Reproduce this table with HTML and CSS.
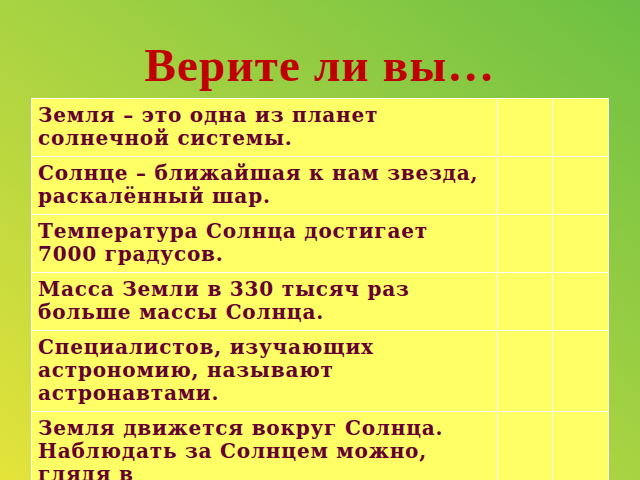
FILE: index.html
```html
<!DOCTYPE html>
<html lang="ru">
<head>
<meta charset="utf-8">
<link rel="stylesheet" href="styles.css">
</head>
<body>
<div class="slide">
  <h1 class="title">Верите ли вы…</h1>
  <table class="quiz">
    <colgroup><col class="c-text"><col class="c-a"><col class="c-b"></colgroup>
    <tr><td>Земля – это одна из планет<br>солнечной системы.</td><td></td><td></td></tr>
    <tr><td>Солнце – ближайшая к нам звезда,<br>раскалённый шар.</td><td></td><td></td></tr>
    <tr><td>Температура Солнца достигает<br>7000 градусов.</td><td></td><td></td></tr>
    <tr><td>Масса Земли в 330 тысяч раз<br>больше массы Солнца.</td><td></td><td></td></tr>
    <tr><td>Специалистов, изучающих<br>астрономию, называют<br>астронавтами.</td><td></td><td></td></tr>
    <tr><td>Земля движется вокруг Солнца.<br>Наблюдать за Солнцем можно,<br>глядя в<br>телескоп.</td><td></td><td></td></tr>
  </table>
</div>
</body>
</html>
```

FILE: styles.css
```css
html, body {
  margin: 0;
  padding: 0;
  width: 640px;
  height: 480px;
  overflow: hidden;
}
.slide {
  width: 640px;
  height: 480px;
  background: linear-gradient(to top right, #e4e33a 0%, #a8d342 50%, #6cc043 100%);
  display: flex;
  flex-direction: column;
  align-items: center;
}
.title {
  flex-shrink: 0;
  margin: 0;
  height: 98px;
  box-sizing: border-box;
  padding-top: 38px;
  font-family: "Liberation Serif", serif;
  font-weight: bold;
  font-size: 47px;
  line-height: 54px;
  letter-spacing: 1.2px;
  color: #c00000;
}
.quiz {
  flex-shrink: 0;
  width: 577px;
  border-collapse: collapse;
  background: #ffff66;
  table-layout: fixed;
  border: 1px solid #f4f4c0;
}
.c-text { width: 466px; }
.c-a { width: 55px; }
.c-b { width: 56px; }
.quiz td {
  border: 1px solid #ffffff;
  padding: 5px 6px 6px;
  vertical-align: top;
  white-space: nowrap;
  font-family: "DejaVu Serif", serif;
  font-weight: bold;
  font-size: 20px;
  line-height: 23px;
  letter-spacing: 0.8px;
  color: #660033;
}
```
